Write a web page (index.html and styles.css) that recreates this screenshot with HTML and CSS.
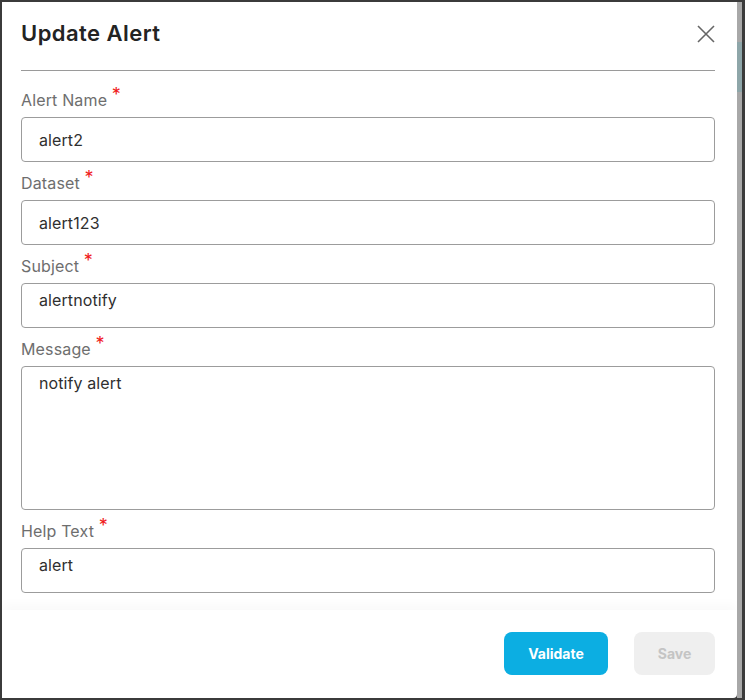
FILE: index.html
```html
<!DOCTYPE html>
<html>
<head>
<meta charset="utf-8">
<link rel="stylesheet" href="styles.css">
</head>
<body>
<div class="frame">
  <div class="dialog">
    <div class="body">
      <div class="header">
        <h1 class="title">Update Alert</h1>
        <button class="close" aria-label="Close">
          <svg width="18" height="18" viewBox="0 0 18 18"><path d="M1 1L17 17M17 1L1 17" stroke="#666" stroke-width="1.6" fill="none"/></svg>
        </button>
      </div>
      <div class="divider"></div>
      <div class="form">
        <div class="field">
          <label class="label">Alert Name <span class="req">*</span></label>
          <div class="input">alert2</div>
        </div>
        <div class="field">
          <label class="label">Dataset <span class="req">*</span></label>
          <div class="input">alert123</div>
        </div>
        <div class="field">
          <label class="label">Subject <span class="req">*</span></label>
          <div class="input area">alertnotify</div>
        </div>
        <div class="field">
          <label class="label">Message <span class="req">*</span></label>
          <div class="input area tall">notify alert</div>
        </div>
        <div class="field">
          <label class="label">Help Text <span class="req">*</span></label>
          <div class="input area">alert</div>
        </div>
      </div>
    </div>
    <div class="footer">
      <button class="btn primary">Validate</button>
      <button class="btn disabled">Save</button>
    </div>
  </div>
  <div class="backdrop">
    <div class="thumb"></div>
  </div>
</div>
</body>
</html>
```

FILE: styles.css
```css
* { box-sizing: border-box; }
html, body { margin: 0; padding: 0; }
body {
  background: #3b3b3b;
  font-family: "Inter", "Open Sans", sans-serif;
  width: 745px;
  height: 700px;
}
.frame {
  display: flex;
  height: 700px;
  padding: 2px 3px 2px 2px;
}
.dialog {
  flex: 1;
  background: #fff;
  display: flex;
  flex-direction: column;
  border-bottom-right-radius: 4px;
  overflow: hidden;
}
.backdrop {
  width: 5px;
  background: #a8a8a8;
  padding-top: 40px;
}
.thumb {
  height: 50px;
  background: #8ea6a9;
}
.body {
  flex: 1;
  padding: 0 22px 0 19px;
}
.header {
  display: flex;
  align-items: flex-start;
  justify-content: space-between;
  height: 68px;
  padding-top: 16px;
}
.title {
  margin: 0;
  font-size: 22px;
  line-height: 30px;
  font-weight: 600;
  color: #232323;
  letter-spacing: 0.45px;
}
.close {
  border: none;
  background: none;
  padding: 0;
  margin-top: 7px;
  margin-right: 0;
  width: 18px;
  height: 18px;
  display: flex;
  cursor: pointer;
}
.divider {
  height: 1px;
  background: #9a9a9a;
}
.form {
  display: flex;
  flex-direction: column;
  gap: 10px;
  padding-top: 18px;
}
.field {
  display: flex;
  flex-direction: column;
  gap: 6px;
}
.label {
  display: block;
  height: 22px;
  font-size: 16px;
  line-height: 22px;
  color: #6e6e6e;
  letter-spacing: 0.15px;
}
.req {
  color: #f01b1b;
  font-size: 18px;
  line-height: 0;
  position: relative;
  top: -5px;
}
.input {
  height: 45px;
  border: 1px solid #9c9c9c;
  border-radius: 4px;
  padding: 0 17px;
  display: flex;
  align-items: center;
  font-size: 16px;
  color: #2f2f2f;
  letter-spacing: 0.1px;
}
.input.area {
  align-items: flex-start;
  padding-top: 6px;
  line-height: 20px;
}
.input.tall {
  height: 144px;
}
.footer {
  height: 88px;
  display: flex;
  justify-content: flex-end;
  align-items: center;
  gap: 26px;
  padding: 0 22px 1px 0;
  box-shadow: 0 -6px 10px rgba(0,0,0,0.025);
  position: relative;
}
.btn {
  border: none;
  font-family: inherit;
  font-weight: 700;
  font-size: 14px;
  height: 43px;
  border-radius: 8px;
  padding: 0;
}
.primary {
  width: 104px;
  background: #0caee2;
  color: #fff;
}
.disabled {
  width: 81px;
  background: #efefef;
  color: #c4c4c4;
}
```
